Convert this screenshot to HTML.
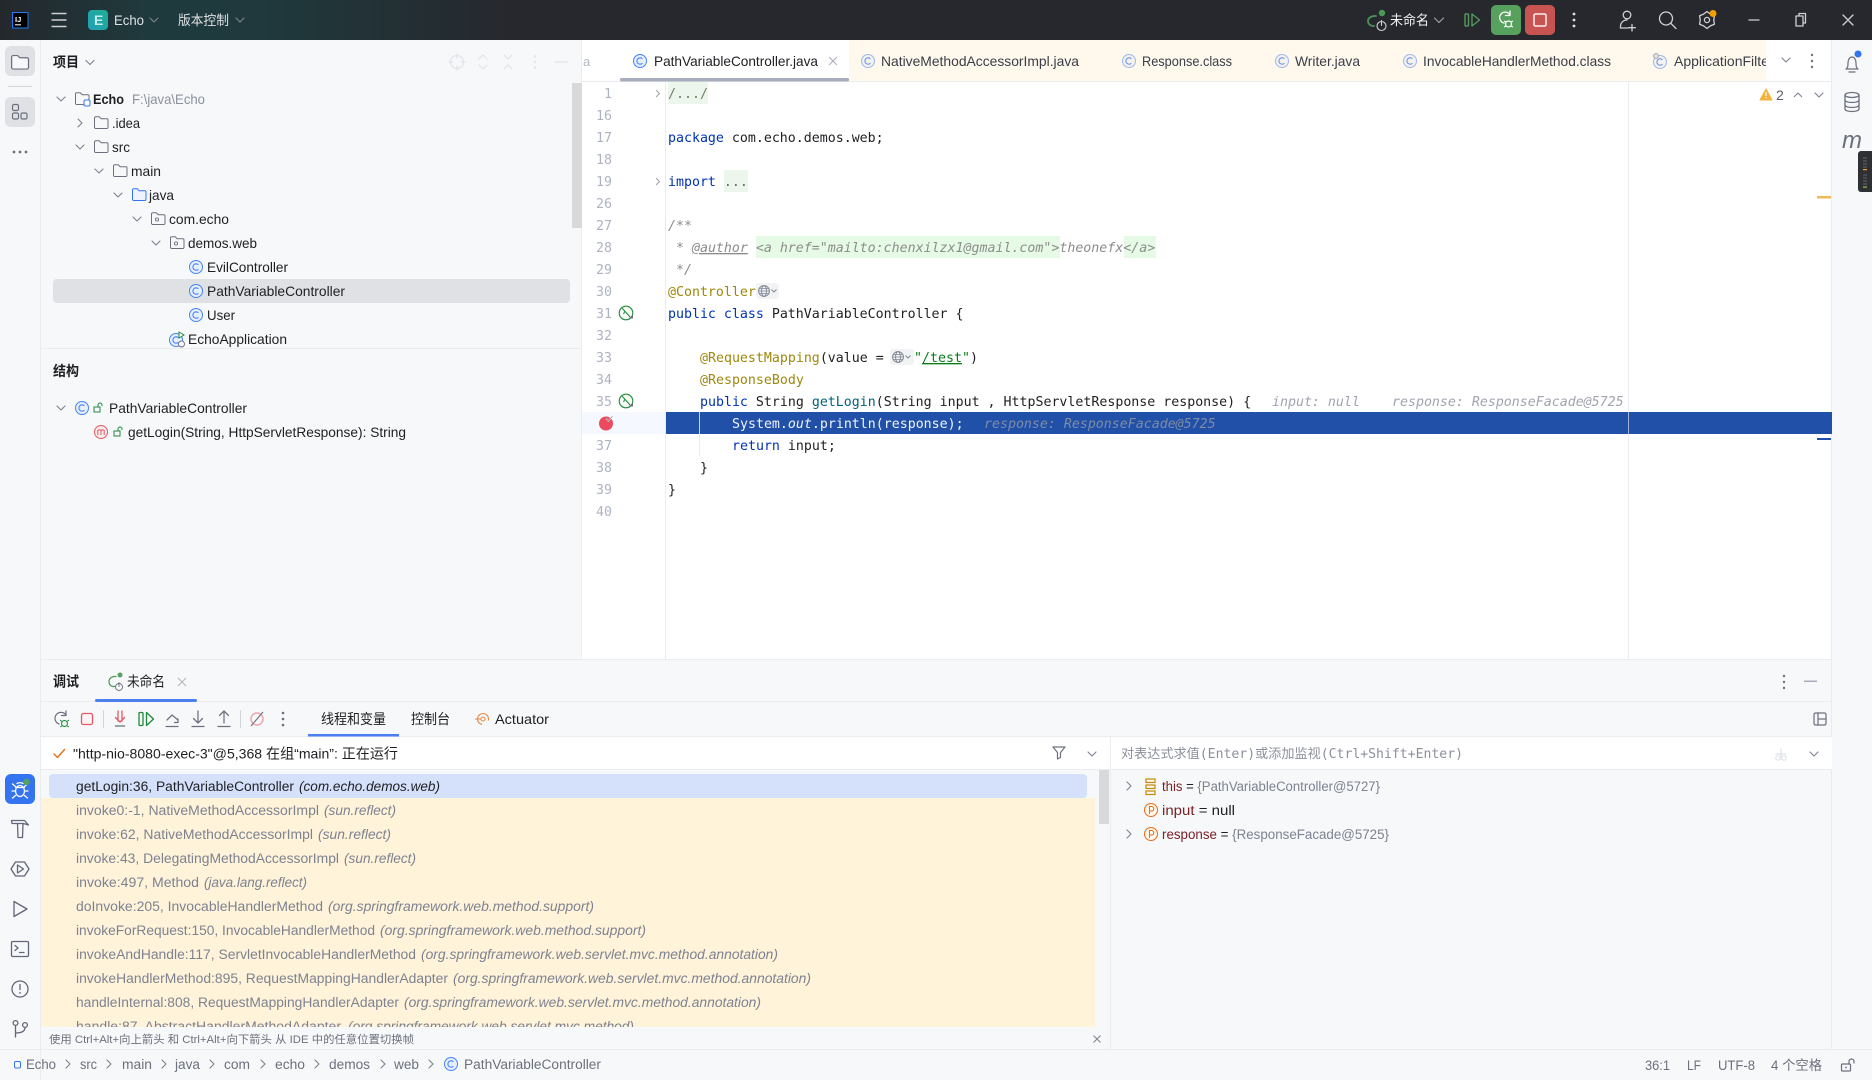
<!DOCTYPE html>
<html lang="zh">
<head>
<meta charset="utf-8">
<title>Echo - PathVariableController.java</title>
<style>
html,body{margin:0;padding:0;background:#F7F8FA;width:1872px;height:1080px;overflow:hidden}
svg{display:block}
text{font-family:"Liberation Sans","Noto Sans CJK SC",sans-serif;font-size:14px;fill:#1E1F22;white-space:pre}
.m,.m tspan{font-family:"DejaVu Sans Mono","Noto Sans CJK SC",monospace;font-size:13.28px}
.n{fill:#AEB3C2;text-anchor:end;font-family:"DejaVu Sans Mono",monospace;font-size:13.28px}
.k{fill:#0033B3}.a{fill:#9E880D}.c{fill:#8C8C8C;font-style:italic}.s{fill:#067D17}.f{fill:#00627A}.g{fill:#A0A4AE;font-style:italic}
.w{fill:#DFE1E5;font-size:13.5px}
.gr{fill:#6C707E}
.fr{fill:#7E8290;font-size:13.5px}.it{font-style:italic;fill:#7E8290;font-size:13.5px}
.st{fill:#6C707E;font-size:13.5px}
.i{fill:none;stroke:#6C707E;stroke-width:1.2;stroke-linecap:round;stroke-linejoin:round}
.iw{fill:none;stroke:#CED0D6;stroke-width:1.3;stroke-linecap:round;stroke-linejoin:round}
.ig{fill:none;stroke:#E1E3E8;stroke-width:1.2;stroke-linecap:round;stroke-linejoin:round}
</style>
</head>
<body>
<svg width="1872" height="1080" viewBox="0 0 1872 1080" xmlns="http://www.w3.org/2000/svg">
<defs>
<linearGradient id="tb" x1="0" x2="1" y1="0" y2="0"><stop offset="0" stop-color="#24282D"/><stop offset=".08" stop-color="#1F3A3D"/><stop offset=".14" stop-color="#1F393C"/><stop offset=".27" stop-color="#26282E"/><stop offset="1" stop-color="#26282E"/></linearGradient>
<linearGradient id="eb" x1="0" x2="1" y1="1" y2="0"><stop offset="0" stop-color="#22A0B8"/><stop offset="1" stop-color="#1FAE93"/></linearGradient>
<clipPath id="frc"><rect x="41" y="769" width="1054" height="258"/></clipPath>
<clipPath id="tabc"><rect x="849" y="40" width="917" height="41"/></clipPath>
<g id="cv"><path d="M-4-2 0 2 4-2" fill="none" stroke="#7E8290" stroke-width="1.1" stroke-linecap="round" stroke-linejoin="round"/></g>
<g id="cr"><path d="M-2-4 2 0-2 4" fill="none" stroke="#7E8290" stroke-width="1.1" stroke-linecap="round" stroke-linejoin="round"/></g>
<g id="fd"><path d="M.5 3a1.2 1.2 0 0 1 1.2-1.2h3.6l1.8 1.9h5.7A1.2 1.2 0 0 1 14 4.9v7.4a1.2 1.2 0 0 1-1.2 1.2H1.7a1.2 1.2 0 0 1-1.2-1.2z" fill="#F7F8FA" stroke="#6C707E" stroke-width="1"/></g>
<g id="fb"><path d="M.5 3a1.2 1.2 0 0 1 1.2-1.2h3.6l1.8 1.9h5.7A1.2 1.2 0 0 1 14 4.9v7.4a1.2 1.2 0 0 1-1.2 1.2H1.7a1.2 1.2 0 0 1-1.2-1.2z" fill="#EDF3FF" stroke="#3574F0" stroke-width="1"/></g>
<g id="fp"><use href="#fd"/><circle cx="6" cy="8.5" r="1.6" fill="none" stroke="#6C707E" stroke-width=".9"/></g>
<g id="cc"><circle r="6.5" fill="#E7EFFD" stroke="#4682FA" stroke-width="1"/><path d="M2.4-2.2A3.2 3.2 0 1 0 2.4 2.2" fill="none" stroke="#4682FA" stroke-width="1.1"/></g>
<g id="ct"><circle r="6.5" fill="#F3F2F0" stroke="#9DB8EE" stroke-width="1"/><path d="M2.4-2.2A3.2 3.2 0 1 0 2.4 2.2" fill="none" stroke="#6F95E5" stroke-width="1.1"/></g>
<g id="lk"><rect x="-4" y="-1" width="6" height="5" fill="none" stroke="#208A3C" stroke-width="1"/><path d="M0-1v-2a2 2 0 0 1 4 0v1" fill="none" stroke="#208A3C" stroke-width="1"/></g>
<g id="gl"><circle r="5.4" fill="none" stroke="#818594" stroke-width="1"/><ellipse rx="2.4" ry="5.4" fill="none" stroke="#818594" stroke-width=".9"/><path d="M-5.4 0H5.4M-4.6-2.6H4.6M-4.6 2.6H4.6" stroke="#818594" stroke-width=".8"/></g>
<g id="sw"><circle r="6.8" fill="#F6FBF6" stroke="#208A3C" stroke-width="1.1"/><path d="M-4-5 4.500 4.500M-1-2-2.500 1" stroke="#208A3C" stroke-width="1" fill="none"/><path d="M3 5.500h4v-4z" fill="#6C707E"/></g>
</defs>

<!-- backgrounds -->
<rect width="1872" height="1080" fill="#F7F8FA"/>
<rect width="1872" height="40" fill="url(#tb)"/>
<rect x="582" y="40" width="1250" height="619" fill="#fff"/>
<rect x="849" y="40" width="917" height="41" fill="#FFF8EC"/>
<rect x="582" y="81" width="1250" height="1" fill="#EBECF0"/>
<rect x="620" y="78" width="229" height="3.5" rx="1.5" fill="#A8ADBD"/>
<rect x="40" y="40" width="1" height="1040" fill="#EBECF0"/>
<rect x="41" y="348" width="541" height="1" fill="#EBECF0"/>
<rect x="581" y="40" width="1" height="620" fill="#EBECF0"/>
<rect x="1831" y="40" width="1" height="1009" fill="#EBECF0"/>

<!-- Top bar -->
<rect x="12.5" y="12.5" width="15.5" height="15.5" fill="#000" stroke="#1F7CF0" stroke-width="1"/>
<text x="15" y="22" style="font-size:7.5px;font-weight:700;fill:#fff">IJ</text>
<rect x="15" y="24.3" width="6" height="1" fill="#fff"/>
<path d="M51.5 13.5h15M51.5 20h15M51.5 26.5h15" stroke="#CED0D6" stroke-width="1.5"/>
<rect x="88" y="10" width="20" height="20" rx="4" fill="url(#eb)"/>
<text x="94" y="25" style="font-size:14px;font-weight:700;fill:#fff;fill-opacity:.75">E</text>
<text x="114" y="25" class="w" textLength="30" lengthAdjust="spacingAndGlyphs">Echo</text>
<use href="#cv" x="154" y="20"/>
<text x="178" y="25" class="w" textLength="51" lengthAdjust="spacingAndGlyphs">版本控制</text>
<use href="#cv" x="240" y="20"/>

<g fill="none" stroke-linecap="round" stroke-linejoin="round">
<path d="M1376 16a7 5 0 0 0-8 5 5 5 0 0 0 5 5h1" stroke="#4E8F5B" stroke-width="1.8"/>
<circle cx="1382" cy="13" r="3.2" fill="#499C54"/>
<circle cx="1381.500" cy="26" r="4.500" stroke="#CED0D6" stroke-width="1.100"/>
<path d="M1381.500 20.500v5" stroke="#CED0D6" stroke-width="1.100"/>
</g>
<text x="1390" y="25" style="font-size:13.5px;fill:#F0F1F2" textLength="39" lengthAdjust="spacingAndGlyphs">未命名</text>
<path d="M1434.500 18 1439 22.500 1443.500 18" fill="none" stroke="#9DA0A8" stroke-width="1.200" stroke-linecap="round" stroke-linejoin="round"/>
<rect x="1465" y="14" width="3.500" height="12" rx="1" fill="none" stroke="#57965C" stroke-width="1.400"/>
<path d="M1472 14v12l7.500-6z" fill="none" stroke="#57965C" stroke-width="1.400" stroke-linejoin="round"/>
<rect x="1491" y="5" width="30" height="30" rx="5" fill="#57A05D"/>
<path d="M1510 15a5.500 5.500 0 1 0-6 8" fill="none" stroke="#fff" stroke-width="1.300" stroke-linecap="round"/>
<path d="M1510 11v4.500h-4.500" fill="none" stroke="#fff" stroke-width="1.300" stroke-linecap="round" stroke-linejoin="round"/>
<circle cx="1508.500" cy="24" r="3" fill="none" stroke="#fff" stroke-width="1.200"/>
<path d="M1504 21l2 1M1513 21l-2 1M1504 27l2-1M1513 27l-2-1" stroke="#fff" stroke-width="1"/>
<rect x="1525" y="5" width="30" height="30" rx="5" fill="#C75450"/>
<rect x="1534" y="14" width="12" height="12" rx="1.500" fill="none" stroke="#fff" stroke-opacity=".9" stroke-width="1.500"/>
<g fill="#DFE1E5"><circle cx="1574" cy="14" r="1.400"/><circle cx="1574" cy="20" r="1.400"/><circle cx="1574" cy="26" r="1.400"/></g>
<g class="iw">
<circle cx="1627" cy="15" r="3.800"/>
<path d="M1620.500 28c-.5-5 2.500-8 6.500-8M1620.500 28h7.500M1632 24.500v6.500M1628.800 27.700h6.500"/>
<circle cx="1666" cy="18.500" r="6.500"/><path d="M1671 23.500l5 5"/>
<path d="M1707 11.500l3.400 2.600 4 1.650-.6 4.250.6 4.250-4 1.650-3.400 2.600-3.400-2.600-4-1.650.6-4.250-.6-4.250 4-1.650z"/><circle cx="1707" cy="20" r="2.600"/>
<path d="M1749 20h10M1796 16h7v10h-7zM1799 16v-2.500h6.500v9.500h-2.500M1843 15l10 10M1853 15l-10 10"/>
</g>
<circle cx="1713" cy="13.500" r="3.500" fill="#F2A000"/>

<!-- Left tool bar -->
<rect x="5" y="46" width="30" height="30" rx="6" fill="#DFE1E5"/>
<use href="#fd" transform="translate(11 53.500) scale(1.250 1.150)"/>
<rect x="8" y="86" width="24" height="1" fill="#D3D5DB"/>
<rect x="5" y="97" width="30" height="30" rx="6" fill="#DFE1E5"/>
<g class="i"><rect x="12.500" y="104.500" width="6" height="6" rx="1.500"/><rect x="12.500" y="113" width="6" height="6" rx="1.500"/><rect x="21" y="113" width="6" height="6" rx="1.500"/></g>
<g fill="#6C707E"><circle cx="14" cy="152" r="1.400"/><circle cx="20" cy="152" r="1.400"/><circle cx="26" cy="152" r="1.400"/></g>

<rect x="5" y="774" width="30" height="30" rx="6" fill="#3574F0"/>
<g fill="none" stroke="#fff" stroke-width="1.300" stroke-linecap="round">
<ellipse cx="20" cy="791" rx="4.500" ry="5.500"/><path d="M15.800 787.500h8.400M12.500 784l3 2.500M27.500 784l-3 2.500M12 791h3.500M28 791h-3.500M12.500 798l3-2.500M27.500 798l-3-2.500M17 783.500c1-1 5-1 6 0"/>
</g>
<circle cx="26.500" cy="782" r="3.200" fill="#57A05D"/>
<g class="i" style="stroke-width:1.300;stroke:#62667A">
<path d="M11.500 820.500h13l4 4.500-5-1.500H12zM17.500 823.500h5.500L22.500 837.500h-4.500z"/>
<path d="M11 869l4.500-7h9l4.500 7-4.500 7h-9zM17.500 865v8l6-4z"/>
<path d="M14 901.500l13 7.500-13 7.500z"/>
<rect x="11.500" y="941.500" width="17" height="15" rx="1.200"/><path d="M15 945.500l3 2.500-3 2.500M19.500 952.500h4.500"/>
<circle cx="20" cy="989" r="8"/><path d="M20 984.500v5M20 992.500v.8"/>
<circle cx="15.500" cy="1023" r="2.400"/><circle cx="25" cy="1025" r="2.400"/><path d="M15.500 1025.500V1037M15.500 1033c5 0 9.500-1 9.500-5.500"/>
</g>

<!-- Project panel -->
<text x="53" y="67" style="font-size:14px;font-weight:600" textLength="26" lengthAdjust="spacingAndGlyphs">项目</text>
<use href="#cv" x="90" y="62.500"/>
<g class="ig">
<circle cx="457" cy="62" r="6.500"/><path d="M457 54v4M457 66v4M449 62h4M461 62h4"/>
<path d="M479 59l4-4 4 4M479 65l4 4 4-4M504 55l4 4 4-4M504 69l4-4 4 4M555 62h12"/>
</g>
<g fill="#E1E3E8"><circle cx="535" cy="56.500" r="1.200"/><circle cx="535" cy="62" r="1.200"/><circle cx="535" cy="67.500" r="1.200"/></g>
<rect x="572" y="83" width="10" height="145" fill="#D9D9D9"/>
<clipPath id="ac"><rect x="582" y="50" width="8" height="24"/></clipPath>
<text x="583" y="66" style="font-size:13px;fill:#B4B8C2" clip-path="url(#ac)">a</text>

<use href="#cv" x="61" y="99"/><use href="#cr" x="80" y="123"/><use href="#cv" x="80" y="147"/><use href="#cv" x="99" y="171"/><use href="#cv" x="118" y="195"/><use href="#cv" x="137" y="219"/><use href="#cv" x="156" y="243"/>
<use href="#fd" x="75" y="91"/><rect x="84" y="100" width="6" height="6" rx="1.500" fill="#fff" stroke="#3574F0" stroke-width="1"/>
<use href="#fd" x="94" y="115"/><use href="#fd" x="94" y="139"/><use href="#fd" x="113" y="163"/><use href="#fb" x="132" y="187"/><use href="#fp" x="151" y="211"/><use href="#fp" x="170" y="235"/>
<rect x="53" y="279" width="517" height="24" rx="4" fill="#DFE1E5"/>
<use href="#cc" x="196" y="267"/><use href="#cc" x="196" y="291"/><use href="#cc" x="196" y="315"/>
<use href="#cc" x="176" y="340"/>
<path d="M179 332l5 3-5 3z" fill="#fff" stroke="#208A3C" stroke-width="1"/>
<circle cx="181.500" cy="344" r="3" fill="#F7F8FA" stroke="#6C707E" stroke-width=".9"/>

<text x="93" y="104" style="font-weight:700;font-size:13.500px" textLength="31" lengthAdjust="spacingAndGlyphs">Echo</text>
<text x="132" y="104" class="gr" style="fill:#8C909C" textLength="73" lengthAdjust="spacingAndGlyphs">F:\java\Echo</text>
<text x="112" y="128" textLength="28" lengthAdjust="spacingAndGlyphs">.idea</text>
<text x="112" y="152" textLength="18" lengthAdjust="spacingAndGlyphs">src</text>
<text x="131" y="176" textLength="30" lengthAdjust="spacingAndGlyphs">main</text>
<text x="149" y="200" textLength="25" lengthAdjust="spacingAndGlyphs">java</text>
<text x="169" y="224" textLength="60" lengthAdjust="spacingAndGlyphs">com.echo</text>
<text x="188" y="248" textLength="69" lengthAdjust="spacingAndGlyphs">demos.web</text>
<text x="207" y="272" textLength="81" lengthAdjust="spacingAndGlyphs">EvilController</text>
<text x="207" y="296" textLength="138" lengthAdjust="spacingAndGlyphs">PathVariableController</text>
<text x="207" y="320" textLength="28" lengthAdjust="spacingAndGlyphs">User</text>
<text x="188" y="344" textLength="99" lengthAdjust="spacingAndGlyphs">EchoApplication</text>

<!-- Structure -->
<text x="53" y="376" style="font-weight:600" textLength="26" lengthAdjust="spacingAndGlyphs">结构</text>
<use href="#cv" x="61" y="408"/>
<use href="#cc" x="82" y="408"/><use href="#lk" x="98" y="408"/>
<text x="109" y="413" textLength="138" lengthAdjust="spacingAndGlyphs">PathVariableController</text>
<circle cx="101" cy="432" r="6.500" fill="#FCEBEC" stroke="#E55765" stroke-width="1"/>
<path d="M97.800 435v-5M97.800 431c0-1.500 3.200-1.500 3.200 0v4M101 431c0-1.500 3.200-1.500 3.200 0v4" fill="none" stroke="#E55765" stroke-width="1"/>
<use href="#lk" x="118" y="432"/>
<text x="128" y="437" textLength="278" lengthAdjust="spacingAndGlyphs">getLogin(String, HttpServletResponse): String</text>

<!-- Tabs -->
<use href="#cc" x="640" y="61"/>
<text x="654" y="66" textLength="164" lengthAdjust="spacingAndGlyphs">PathVariableController.java</text>
<path d="M829 57l8 8M837 57l-8 8" stroke="#A8ADBD" stroke-width="1"/>
<g clip-path="url(#tabc)">
<use href="#ct" x="868" y="61"/>
<text x="881" y="66" style="fill:#3B3E48" textLength="198" lengthAdjust="spacingAndGlyphs">NativeMethodAccessorImpl.java</text>
<use href="#ct" x="1129" y="61"/>
<text x="1142" y="66" style="fill:#3B3E48" textLength="90" lengthAdjust="spacingAndGlyphs">Response.class</text>
<use href="#ct" x="1282" y="61"/>
<text x="1295" y="66" style="fill:#3B3E48" textLength="65" lengthAdjust="spacingAndGlyphs">Writer.java</text>
<use href="#ct" x="1410" y="61"/>
<text x="1423" y="66" style="fill:#3B3E48" textLength="188" lengthAdjust="spacingAndGlyphs">InvocableHandlerMethod.class</text>
<use href="#ct" x="1660" y="62"/><circle cx="1656" cy="56" r="2.500" fill="#DDD" stroke="#999" stroke-width=".7"/>
<text x="1674" y="66" style="fill:#3B3E48" textLength="172" lengthAdjust="spacingAndGlyphs">ApplicationFilterChain.class</text>
</g>
<use href="#cv" x="1786" y="60"/>
<g fill="#6C707E"><circle cx="1812" cy="55" r="1.200"/><circle cx="1812" cy="61" r="1.200"/><circle cx="1812" cy="67" r="1.200"/></g>

<!-- Right bar -->
<path d="M1846 69c1.500-1 2-2 2-6 0-3 1.500-6 4-6s4 3 4 6c0 4 .5 5 2 6zM1849 72h6" class="i"/>
<circle cx="1858" cy="54" r="3.500" fill="#3574F0"/>
<g class="i" style="stroke-width:1.300"><ellipse cx="1852" cy="95" rx="7" ry="2.500"/><path d="M1845 95v14c0 1.500 3 2.500 7 2.500s7-1 7-2.500V95M1845 100c0 1.500 3 2.500 7 2.500s7-1 7-2.500M1845 105c0 1.500 3 2.500 7 2.500s7-1 7-2.500"/></g>
<text x="1842" y="148" style="font-size:24px;font-style:italic;fill:#6C707E" textLength="20" lengthAdjust="spacingAndGlyphs">m</text>
<rect x="1858" y="151" width="16" height="41" rx="3" fill="#2F3033"/>
<path d="M1863 158h4M1863 161h4M1863 164h4M1863 167h4M1863 175h4M1863 178h4M1863 181h4M1863 184h4" stroke="#666" stroke-width="1"/>
<rect x="1863" y="169" width="4" height="1.200" fill="#E5A33A"/><rect x="1863" y="186.500" width="4" height="1.200" fill="#8BC34A"/>

<!-- Editor highlights -->
<rect x="668" y="82" width="40" height="22" fill="#EDF6EC"/>
<rect x="724" y="170" width="24" height="22" fill="#EDF6EC"/>
<rect x="756" y="236" width="304" height="22" fill="#E6FBE6"/>
<rect x="1124" y="236" width="32" height="22" fill="#E6FBE6"/>
<rect x="756" y="283" width="23" height="16" rx="3" fill="#F2F3F5"/>
<rect x="890" y="349" width="24" height="16" rx="3" fill="#F2F3F5"/>
<rect x="582" y="412" width="84" height="22" fill="#F5F8FE"/>
<rect x="666" y="412" width="1166" height="22" fill="#2150A8"/>
<rect x="665" y="82" width="1" height="577" fill="#EBECF0"/>
<rect x="1628" y="82" width="1" height="577" fill="#EBECF0"/>
<rect x="1628" y="412" width="1" height="22" fill="#9FB3D9"/>
<rect x="699" y="412" width="1" height="22" fill="#C6D2E8"/><rect x="699" y="434" width="1" height="22" fill="#EBECF0"/>

<!-- gutter numbers -->
<text class="n" x="612" y="98">1</text><text class="n" x="612" y="120">16</text><text class="n" x="612" y="142">17</text><text class="n" x="612" y="164">18</text><text class="n" x="612" y="186">19</text><text class="n" x="612" y="208">26</text><text class="n" x="612" y="230">27</text><text class="n" x="612" y="252">28</text><text class="n" x="612" y="274">29</text><text class="n" x="612" y="296">30</text><text class="n" x="612" y="318">31</text><text class="n" x="612" y="340">32</text><text class="n" x="612" y="362">33</text><text class="n" x="612" y="384">34</text><text class="n" x="612" y="406">35</text><text class="n" x="612" y="450">37</text><text class="n" x="612" y="472">38</text><text class="n" x="612" y="494">39</text><text class="n" x="612" y="516">40</text>
<path d="M656 90l3.500 3.500-3.500 3.500M656 178l3.500 3.500-3.500 3.500" fill="none" stroke="#9DA0A8" stroke-width="1"/>
<use href="#sw" x="626" y="313"/><use href="#sw" x="626" y="401"/>
<circle cx="606" cy="423.500" r="7" fill="#EB4A5F"/>
<path d="M606 418.500l2.500 2.500 4-5" fill="none" stroke="#fff" stroke-width="1.300"/><path d="M606 418.500l2.500 2.500 4-5" fill="none" stroke="#6C707E" stroke-width=".6"/>

<!-- code -->
<text class="m" x="668" y="98" style="fill:#6F7F66">/.../</text>
<text class="m" x="668" y="142"><tspan class="k">package</tspan> com.echo.demos.web;</text>
<text class="m" x="668" y="186"><tspan class="k">import</tspan> <tspan style="fill:#5F6B5F">...</tspan></text>
<text class="m c" x="668" y="230">/**</text>
<text class="m c" x="668" y="252"> * <tspan text-decoration="underline" style="font-style:italic">@author</tspan> &lt;a href="mailto:chenxilzx1@gmail.com"&gt;theonefx&lt;/a&gt;</text>
<text class="m c" x="668" y="274"> */</text>
<text class="m a" x="668" y="296">@Controller</text>
<text class="m" x="668" y="318"><tspan class="k">public class</tspan> PathVariableController {</text>
<text class="m" x="700" y="362"><tspan class="a">@RequestMapping</tspan>(value =</text>
<text class="m" x="914" y="362"><tspan class="s">"</tspan><tspan class="s" text-decoration="underline">/test</tspan><tspan class="s">"</tspan>)</text>
<text class="m a" x="700" y="384">@ResponseBody</text>
<text class="m" x="700" y="406"><tspan class="k">public</tspan> String <tspan class="f">getLogin</tspan>(String input , HttpServletResponse response) {</text>
<text class="m g" x="1272" y="406">input: null</text>
<text class="m g" x="1392" y="406">response: ResponseFacade@5725</text>
<text class="m" x="732" y="428" style="fill:#F0F3FA">System.<tspan style="font-style:italic">out</tspan>.println(response);</text>
<text class="m" x="984" y="428" style="fill:#7E8CA6;font-style:italic">response: ResponseFacade@5725</text>
<text class="m" x="732" y="450"><tspan class="k">return</tspan> input;</text>
<text class="m" x="700" y="472">}</text>
<text class="m" x="668" y="494">}</text>
<use href="#gl" x="764" y="291"/><path d="M771.500 289.500l2.500 2.500 2.500-2.500" fill="none" stroke="#818594"/>
<use href="#gl" x="898" y="357"/><path d="M905.500 355.500l2.500 2.500 2.500-2.500" fill="none" stroke="#818594"/>

<!-- editor inspections -->
<path d="M1766 89l6 11h-12z" fill="#F2B33C" stroke="#F2B33C" stroke-linejoin="round"/><rect x="1765.400" y="92" width="1.200" height="4" fill="#fff"/><rect x="1765.400" y="97" width="1.200" height="1.200" fill="#fff"/>
<text x="1776" y="100" style="font-size:14px;fill:#5A5D6B">2</text>
<path d="M1794 97l4-4 4 4" fill="none" stroke="#7E8290" stroke-width="1.100"/>
<use href="#cv" x="1819" y="95"/>
<rect x="1817" y="196" width="14" height="2.500" fill="#F2B957"/>
<rect x="1817" y="438" width="14" height="2" fill="#2150A8"/>

<!-- Bottom panel -->
<rect x="41" y="659" width="1791" height="1" fill="#EBECF0"/>
<rect x="41" y="701" width="1791" height="1" fill="#EBECF0"/>
<rect x="41" y="737" width="1791" height="32" fill="#fff"/>
<rect x="41" y="736" width="1791" height="1" fill="#EBECF0"/>
<rect x="41" y="769" width="1791" height="1" fill="#EBECF0"/>
<rect x="1110" y="737" width="1" height="312" fill="#EBECF0"/>
<text x="53" y="686.500" style="font-weight:600" textLength="26" lengthAdjust="spacingAndGlyphs">调试</text>
<g fill="none" stroke-linecap="round">
<path d="M116 676.500a6 5 0 0 0-7 5 4.500 4.500 0 0 0 4 5h2" stroke="#4E9A5B" stroke-width="1.300"/>
<circle cx="120" cy="675" r="2.500" fill="#57A05D"/>
<circle cx="119" cy="687" r="3.500" stroke="#6C707E" stroke-width=".9"/><path d="M119 682.500v4" stroke="#6C707E" stroke-width=".9"/>
</g>
<text x="127" y="686.500" textLength="38" lengthAdjust="spacingAndGlyphs">未命名</text>
<path d="M178 678l8 8M186 678l-8 8" stroke="#B4B8BF" stroke-width="1.100"/>
<rect x="95" y="699" width="102" height="3" rx="1.500" fill="#4A80F0"/>
<g fill="#6C707E"><circle cx="1784" cy="676" r="1.200"/><circle cx="1784" cy="682" r="1.200"/><circle cx="1784" cy="688" r="1.200"/></g>
<rect x="1804" y="680.500" width="13" height="1.500" fill="#A8ADBD"/>

<!-- debug toolbar -->
<path d="M66 715a6 6 0 1 0-7 9" class="i" fill="none"/><path d="M66 711v4.500h-4.500" class="i"/>
<circle cx="64.500" cy="723.500" r="3" fill="#E8F4E8" stroke="#208A3C" stroke-width="1"/>
<path d="M60 720l2 1.500M69 720l-2 1.500M60 727l2-1M69 727l-2-1" stroke="#208A3C" stroke-width=".9"/>
<rect x="81.500" y="713.500" width="11" height="11" rx="1.800" fill="#FFF5F5" stroke="#E55765" stroke-width="1.300"/>
<rect x="103" y="710" width="1" height="18" fill="#D3D5DB"/>
<g fill="none" stroke="#E55765" stroke-width="1.300" stroke-linecap="round" stroke-linejoin="round"><path d="M118 711v10M122 711v10M115.500 717.500l4.500 4.500 4.500-4.500"/></g>
<path d="M115 726h10" stroke="#6C707E" stroke-width="1.300"/>
<rect x="139" y="712.500" width="4" height="13" rx="1" fill="none" stroke="#208A3C" stroke-width="1.300"/>
<path d="M146.500 712.500v13l7-6.500z" fill="none" stroke="#208A3C" stroke-width="1.300" stroke-linejoin="round"/>
<g class="i" style="stroke-width:1.250">
<path d="M167 720l5-5 6 5M174.500 722.500h3.500v-3.500M166 726.500h12"/>
<path d="M198 711v12M193.500 718.500l4.500 4.500 4.500-4.500M192 726.500h12"/>
<path d="M224 723v-12M219.500 715.500l4.500-4.500 4.500 4.500M218 726.500h12"/>
</g>
<rect x="240" y="710" width="1" height="18" fill="#D3D5DB"/>
<circle cx="257" cy="719" r="6" fill="none" stroke="#EFA6AE" stroke-width="1.500"/><path d="M251 726l12-14" stroke="#6C707E" stroke-width="1.100"/>
<g fill="#6C707E"><circle cx="283" cy="713" r="1.300"/><circle cx="283" cy="719" r="1.300"/><circle cx="283" cy="725" r="1.300"/></g>
<text x="321" y="724" textLength="65" lengthAdjust="spacingAndGlyphs">线程和变量</text>
<rect x="308" y="734" width="91" height="2.500" fill="#4A80F0"/>
<text x="411" y="724" textLength="39" lengthAdjust="spacingAndGlyphs">控制台</text>
<circle cx="483" cy="719" r="5.500" fill="none" stroke="#E88B49" stroke-width="1.100" stroke-dasharray="22 8" transform="rotate(145 483 719)"/><circle cx="483" cy="719" r="2" fill="none" stroke="#E88B49" stroke-width="1.100"/><path d="M475 719h6" stroke="#E88B49" stroke-width="1.100"/>
<text x="495" y="724" textLength="54" lengthAdjust="spacingAndGlyphs">Actuator</text>
<g class="i"><rect x="1814" y="713" width="12" height="12" rx="1.500"/><path d="M1818 713v12M1818 719h8"/></g>

<!-- thread row -->
<path d="M54 754l3.500 3.500 7-8" fill="none" stroke="#E66D17" stroke-width="1.400" stroke-linecap="round" stroke-linejoin="round"/>
<text x="73" y="758.500" textLength="325" lengthAdjust="spacingAndGlyphs">"http-nio-8080-exec-3"@5,368 在组“main”: 正在运行</text>
<path d="M1053 747h12l-4.500 5.500v5l-3 1.500v-6.500z" class="i"/>
<use href="#cv" x="1092" y="754"/>
<text class="m" x="1121" y="758" style="fill:#8C909C;font-size:13px" textLength="342" lengthAdjust="spacingAndGlyphs">对表达式求值(Enter)或添加监视(Ctrl+Shift+Enter)</text>
<g class="ig"><path d="M1781 749v10M1776 754h10"/><circle cx="1778" cy="758" r="2.200"/><circle cx="1784" cy="758" r="2.200"/></g>
<use href="#cv" x="1814" y="754"/>

<!-- frames -->
<rect x="41" y="798" width="1054" height="229" fill="#FFF3DA"/>
<rect x="49" y="774" width="1038" height="24" rx="4" fill="#D5E1FB"/>
<rect x="1099" y="770" width="10" height="54" fill="#D9D9D9"/>
<text x="76" y="791" style="font-size:13.500px" textLength="218" lengthAdjust="spacingAndGlyphs">getLogin:36, PathVariableController</text>
<text x="299" y="791" style="font-size:13.500px;font-style:italic" textLength="141" lengthAdjust="spacingAndGlyphs">(com.echo.demos.web)</text>
<g clip-path="url(#frc)">
<text class="fr" x="76" y="815" textLength="243" lengthAdjust="spacingAndGlyphs">invoke0:-1, NativeMethodAccessorImpl</text><text class="it" x="324" y="815" textLength="72" lengthAdjust="spacingAndGlyphs">(sun.reflect)</text>
<text class="fr" x="76" y="839" textLength="237" lengthAdjust="spacingAndGlyphs">invoke:62, NativeMethodAccessorImpl</text><text class="it" x="318" y="839" textLength="73" lengthAdjust="spacingAndGlyphs">(sun.reflect)</text>
<text class="fr" x="76" y="863" textLength="263" lengthAdjust="spacingAndGlyphs">invoke:43, DelegatingMethodAccessorImpl</text><text class="it" x="344" y="863" textLength="72" lengthAdjust="spacingAndGlyphs">(sun.reflect)</text>
<text class="fr" x="76" y="887" textLength="123" lengthAdjust="spacingAndGlyphs">invoke:497, Method</text><text class="it" x="204" y="887" textLength="103" lengthAdjust="spacingAndGlyphs">(java.lang.reflect)</text>
<text class="fr" x="76" y="911" textLength="247" lengthAdjust="spacingAndGlyphs">doInvoke:205, InvocableHandlerMethod</text><text class="it" x="328" y="911" textLength="266" lengthAdjust="spacingAndGlyphs">(org.springframework.web.method.support)</text>
<text class="fr" x="76" y="935" textLength="299" lengthAdjust="spacingAndGlyphs">invokeForRequest:150, InvocableHandlerMethod</text><text class="it" x="380" y="935" textLength="266" lengthAdjust="spacingAndGlyphs">(org.springframework.web.method.support)</text>
<text class="fr" x="76" y="959" textLength="340" lengthAdjust="spacingAndGlyphs">invokeAndHandle:117, ServletInvocableHandlerMethod</text><text class="it" x="421" y="959" textLength="357" lengthAdjust="spacingAndGlyphs">(org.springframework.web.servlet.mvc.method.annotation)</text>
<text class="fr" x="76" y="983" textLength="372" lengthAdjust="spacingAndGlyphs">invokeHandlerMethod:895, RequestMappingHandlerAdapter</text><text class="it" x="453" y="983" textLength="358" lengthAdjust="spacingAndGlyphs">(org.springframework.web.servlet.mvc.method.annotation)</text>
<text class="fr" x="76" y="1007" textLength="323" lengthAdjust="spacingAndGlyphs">handleInternal:808, RequestMappingHandlerAdapter</text><text class="it" x="404" y="1007" textLength="357" lengthAdjust="spacingAndGlyphs">(org.springframework.web.servlet.mvc.method.annotation)</text>
<text class="fr" x="76" y="1031" textLength="265" lengthAdjust="spacingAndGlyphs">handle:87, AbstractHandlerMethodAdapter</text><text class="it" x="348" y="1031" textLength="286" lengthAdjust="spacingAndGlyphs">(org.springframework.web.servlet.mvc.method)</text>
</g>
<text x="49" y="1043" style="font-size:11px;fill:#6C707E" textLength="365" lengthAdjust="spacingAndGlyphs">使用 Ctrl+Alt+向上箭头 和 Ctrl+Alt+向下箭头 从 IDE 中的任意位置切换帧</text>
<path d="M1093.500 1035.500l7 7M1100.500 1035.500l-7 7" stroke="#7E8290" stroke-width="1"/>

<!-- variables -->
<use href="#cr" x="1129" y="786"/><use href="#cr" x="1129" y="834"/>
<g fill="none" stroke="#C58A00" stroke-width="1.200"><rect x="1146" y="779" width="9" height="3.500"/><rect x="1146" y="785" width="9" height="3.500"/><rect x="1146" y="791" width="9" height="3.500"/></g>
<g fill="#FFF6EC" stroke="#E66D17" stroke-width="1"><circle cx="1151" cy="810" r="6.500"/><circle cx="1151" cy="834" r="6.500"/></g>
<g fill="none" stroke="#E66D17" stroke-width="1"><path d="M1149.500 814v-7.500h2a2 2 0 0 1 0 4.500h-2M1149.500 838v-7.500h2a2 2 0 0 1 0 4.500h-2"/></g>
<text x="1162" y="791" style="font-size:13.500px" textLength="218" lengthAdjust="spacingAndGlyphs"><tspan style="fill:#7A1E24">this</tspan> = <tspan style="fill:#7E8290">{PathVariableController@5727}</tspan></text>
<text x="1162" y="815" style="font-size:13.500px" textLength="73" lengthAdjust="spacingAndGlyphs"><tspan style="fill:#7A1E24">input</tspan> = null</text>
<text x="1162" y="839" style="font-size:13.500px" textLength="227" lengthAdjust="spacingAndGlyphs"><tspan style="fill:#7A1E24">response</tspan> = <tspan style="fill:#7E8290">{ResponseFacade@5725}</tspan></text>

<!-- status bar -->
<rect x="0" y="1049" width="1872" height="1" fill="#EBECF0"/>
<rect x="14.500" y="1061.500" width="6" height="6.500" rx="1.500" fill="none" stroke="#3574F0" stroke-width="1"/>
<text class="st" x="26" y="1069" textLength="30" lengthAdjust="spacingAndGlyphs">Echo</text>
<use href="#cr" x="68" y="1064"/>
<text class="st" x="80" y="1069" textLength="17" lengthAdjust="spacingAndGlyphs">src</text>
<use href="#cr" x="109" y="1064"/>
<text class="st" x="122" y="1069" textLength="30" lengthAdjust="spacingAndGlyphs">main</text>
<use href="#cr" x="164" y="1064"/>
<text class="st" x="175" y="1069" textLength="25" lengthAdjust="spacingAndGlyphs">java</text>
<use href="#cr" x="212" y="1064"/>
<text class="st" x="224" y="1069" textLength="26" lengthAdjust="spacingAndGlyphs">com</text>
<use href="#cr" x="263" y="1064"/>
<text class="st" x="275" y="1069" textLength="30" lengthAdjust="spacingAndGlyphs">echo</text>
<use href="#cr" x="317" y="1064"/>
<text class="st" x="329" y="1069" textLength="41" lengthAdjust="spacingAndGlyphs">demos</text>
<use href="#cr" x="383" y="1064"/>
<text class="st" x="394" y="1069" textLength="25" lengthAdjust="spacingAndGlyphs">web</text>
<use href="#cr" x="431" y="1064"/>
<use href="#cc" x="451" y="1064"/>
<text class="st" x="464" y="1069" textLength="137" lengthAdjust="spacingAndGlyphs">PathVariableController</text>
<text class="st" x="1645" y="1070" textLength="25" lengthAdjust="spacingAndGlyphs">36:1</text>
<text class="st" x="1687" y="1070" textLength="14" lengthAdjust="spacingAndGlyphs">LF</text>
<text class="st" x="1718" y="1070" textLength="37" lengthAdjust="spacingAndGlyphs">UTF-8</text>
<text class="st" x="1771" y="1070" textLength="51" lengthAdjust="spacingAndGlyphs">4 个空格</text>
<g class="i"><rect x="1841.500" y="1064" width="9" height="7" rx="1"/><path d="M1849 1064v-2.500a2.500 2.500 0 0 1 5 0v1.500"/></g><circle cx="1846" cy="1067.500" r=".9" fill="#6C707E"/>
</svg>
</body>
</html>
